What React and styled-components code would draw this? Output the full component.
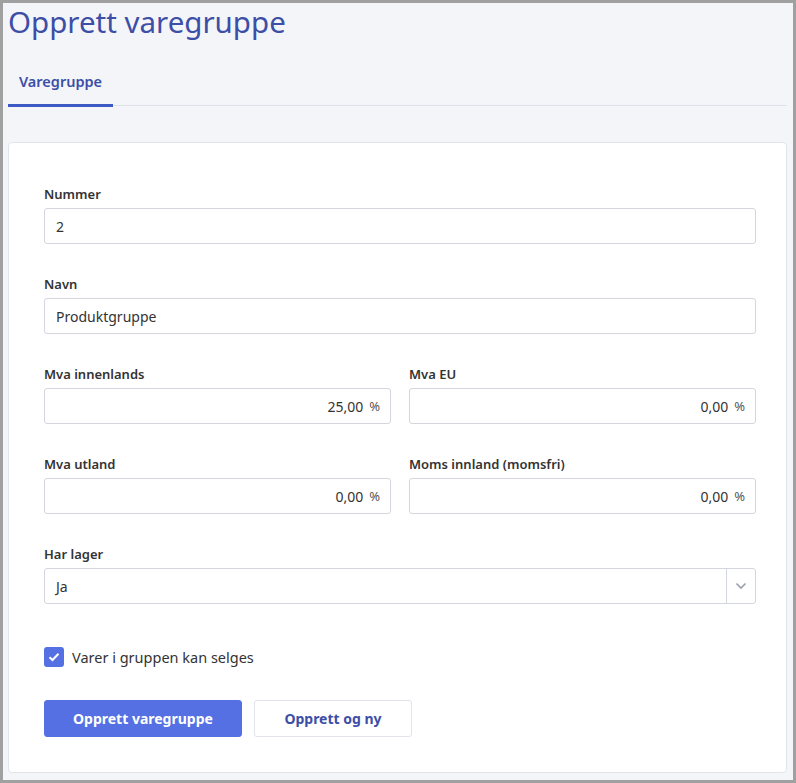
import React from "react";
import styled, { createGlobalStyle } from "styled-components";

const Global = createGlobalStyle`
  html, body { margin: 0; padding: 0; }
  body { font-family: "Noto Sans", "Open Sans", sans-serif; background: #9c9c9c; }
  * { box-sizing: border-box; }
`;

const Frame = styled.div`
  width: 796px; height: 783px; padding: 3px 3px 3px 3px;
  background: #a0a0a0;
`;
const Page = styled.div`
  height: 100%; background: #f4f5f9; padding: 0 6px 0 5px;
  display: flex; flex-direction: column;
`;
const Title = styled.h1`
  margin: 0; padding: 0 0 0 0; font-size: 29.5px; font-weight: 400; color: #3d4ea6; line-height: 38px;
`;
const Tabs = styled.div`
  margin-top: 30px; border-bottom: 1px solid #dfe2ea; display: flex;
`;
const Tab = styled.div`
  padding: 0 11px 13px; font-size: 14.5px; font-weight: 600; color: #3d4ea6;
  border-bottom: 3px solid #3d5ac4; margin-bottom: -2px; line-height: 20px;
`;
const Card = styled.div`
  margin-top: 36px; background: #fff; border: 1px solid #e1e4ea; border-radius: 4px;
  padding: 42px 30px 40px 35px; height: 631px;
  display: flex; flex-direction: column;
`;
const Field = styled.div` display: flex; flex-direction: column; margin-bottom: 31px; `;
const Label = styled.label`
  font-size: 13px; font-weight: 600; color: #333; line-height: 18px; margin-bottom: 5px;
`;
const Input = styled.div`
  height: 36px; border: 1px solid #d3d6dc; border-radius: 3px; display: flex; align-items: center;
  justify-content: ${p => (p.$right ? "flex-end" : "flex-start")};
  padding: 0 ${p => (p.$right ? "10px" : "11px")}; font-size: 14px; color: #333;
`;
const Pct = styled.span` color: #555; margin-left: 6px; font-size: 13px; `;
const Row = styled.div` display: grid; grid-template-columns: 1fr 1fr; column-gap: 18px; `;
const Select = styled.div`
  height: 36px; border: 1px solid #d3d6dc; border-radius: 3px; display: flex; font-size: 14px; color: #333;
`;
const SelVal = styled.div` flex: 1; display: flex; align-items: center; padding: 0 11px; `;
const SelBtn = styled.div`
  width: 29px; border-left: 1px solid #d3d6dc; display: flex; align-items: center; justify-content: center;
`;
const Check = styled.div`
  display: flex; align-items: center; gap: 8px; margin-top: 12px; font-size: 14.5px; color: #333;
`;
const Box = styled.div`
  width: 20px; height: 20px; border-radius: 3px; background: #5570e3;
  display: flex; align-items: center; justify-content: center;
`;
const Buttons = styled.div` display: flex; gap: 12px; margin-top: 33px; `;
const Btn = styled.button`
  height: 37px; padding: 0 ${p => p.$pad}px; border-radius: 3px; font-family: inherit;
  font-size: 14px; font-weight: 700;
  background: ${p => (p.$primary ? "#5570e3" : "#fff")};
  color: ${p => (p.$primary ? "#fff" : "#3d4ea6")};
  border: 1px solid ${p => (p.$primary ? "#5570e3" : "#e1e4ea")};
`;

const Pf = ({ v }) => (
  <Input $right>{v}<Pct>%</Pct></Input>
);

export default function App() {
  return (
    <>
      <Global />
      <Frame>
        <Page>
          <Title>Opprett varegruppe</Title>
          <Tabs><Tab>Varegruppe</Tab></Tabs>
          <Card>
            <Field><Label>Nummer</Label><Input>2</Input></Field>
            <Field><Label>Navn</Label><Input>Produktgruppe</Input></Field>
            <Row>
              <Field><Label>Mva innenlands</Label><Pf v="25,00" /></Field>
              <Field><Label>Mva EU</Label><Pf v="0,00" /></Field>
              <Field><Label>Mva utland</Label><Pf v="0,00" /></Field>
              <Field><Label>Moms innland (momsfri)</Label><Pf v="0,00" /></Field>
            </Row>
            <Field>
              <Label>Har lager</Label>
              <Select>
                <SelVal>Ja</SelVal>
                <SelBtn>
                  <svg width="12" height="8" viewBox="0 0 12 8"><path d="M1.5 1.5 6 6l4.5-4.5" fill="none" stroke="#9aa0ab" strokeWidth="1.6" /></svg>
                </SelBtn>
              </Select>
            </Field>
            <Check>
              <Box>
                <svg width="12" height="10" viewBox="0 0 12 10"><path d="M1.5 5.2 4.5 8 10.5 1.8" fill="none" stroke="#fff" strokeWidth="2" /></svg>
              </Box>
              Varer i gruppen kan selges
            </Check>
            <Buttons>
              <Btn $primary $pad={28}>Opprett varegruppe</Btn>
              <Btn $pad={29.5}>Opprett og ny</Btn>
            </Buttons>
          </Card>
        </Page>
      </Frame>
    </>
  );
}
